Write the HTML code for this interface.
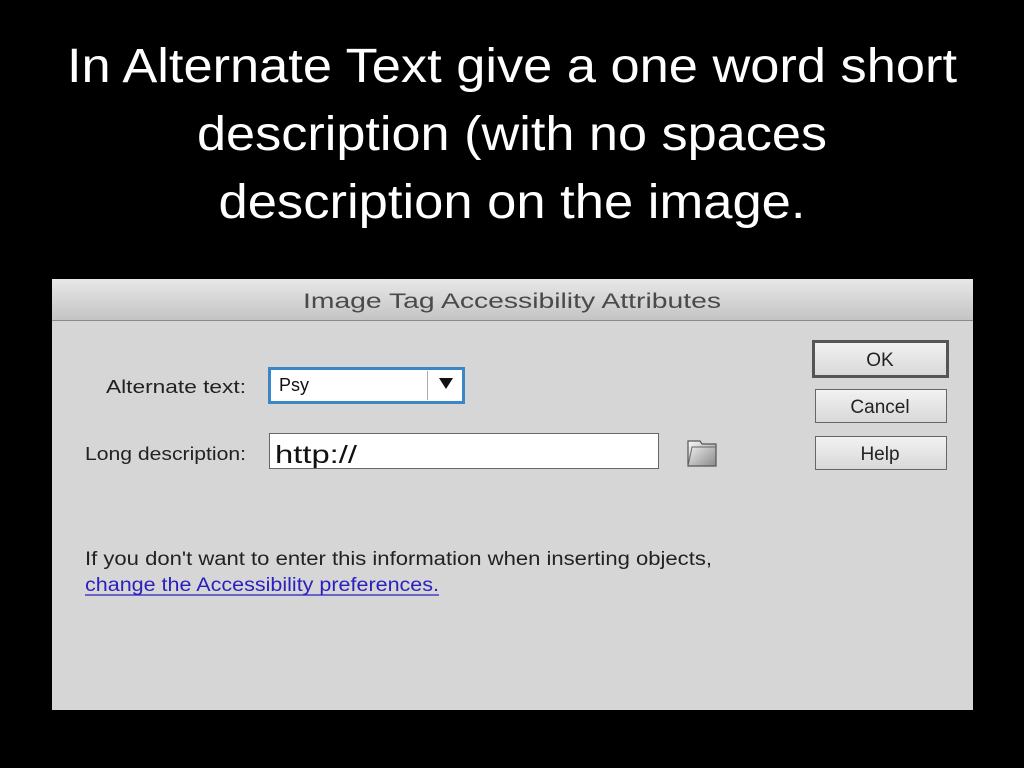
<!DOCTYPE html>
<html><head><style>html,body{margin:0;padding:0;background:#000;}svg{display:block}</style></head>
<body>
<svg width="1024" height="768" xmlns="http://www.w3.org/2000/svg">
<defs>
<linearGradient id="tb" x1="0" y1="0" x2="0" y2="1"><stop offset="0" stop-color="#e8e8e8"/><stop offset="1" stop-color="#c4c4c4"/></linearGradient>
<linearGradient id="btn" x1="0" y1="0" x2="0" y2="1"><stop offset="0" stop-color="#f2f2f2"/><stop offset="1" stop-color="#d8d8d8"/></linearGradient>
<linearGradient id="fold" x1="0" y1="0" x2="1" y2="1"><stop offset="0" stop-color="#fafafa"/><stop offset="1" stop-color="#8a8a8a"/></linearGradient>
</defs>
<rect width="1024" height="768" fill="#000"/>
<g fill="#fff" font-family="Liberation Sans, sans-serif" font-size="48" text-anchor="middle">
<text x="512" y="82" textLength="890" lengthAdjust="spacingAndGlyphs">In Alternate Text give a one word short</text>
<text x="512" y="150" textLength="630" lengthAdjust="spacingAndGlyphs">description (with no spaces</text>
<text x="512" y="218" textLength="587" lengthAdjust="spacingAndGlyphs">description on the image.</text>
</g>
<rect x="52" y="279" width="921" height="431" fill="#d6d6d6"/>
<rect x="52" y="279" width="921" height="41" fill="url(#tb)"/>
<line x1="52" y1="320.5" x2="973" y2="320.5" stroke="#8a8a8a"/>
<g font-family="Liberation Sans, sans-serif">
<text x="303" y="308" font-size="21" fill="#4a4a4a" textLength="418" lengthAdjust="spacingAndGlyphs">Image Tag Accessibility Attributes</text>
<text x="106" y="393" font-size="18" fill="#222" textLength="140" lengthAdjust="spacingAndGlyphs">Alternate text:</text>
<text x="85" y="460" font-size="18" fill="#222" textLength="161" lengthAdjust="spacingAndGlyphs">Long description:</text>
<rect x="269.5" y="368.5" width="194" height="34" fill="#fff" stroke="#3a86c6" stroke-width="3"/>
<line x1="427.5" y1="371" x2="427.5" y2="400" stroke="#aaa"/>
<path d="M439 378 L453 378 L446 389 Z" fill="#111"/>
<text x="279" y="391" font-size="18" fill="#111">Psy</text>
<rect x="269.5" y="433.5" width="389" height="35" fill="#fff" stroke="#666"/>
<text x="275" y="463" font-size="25" fill="#111" textLength="82" lengthAdjust="spacingAndGlyphs">http://</text>
<path d="M688 441 L700 441 L702 444 L716 444 L716 466 L688 466 Z" fill="url(#fold)" stroke="#555" stroke-width="1.2"/>
<path d="M688 466 L692 447 L716 447" fill="none" stroke="#666" stroke-width="1"/>
<rect x="813.5" y="341.5" width="134" height="35" fill="url(#btn)" stroke="#555" stroke-width="3"/>
<rect x="815.5" y="389.5" width="131" height="33" fill="url(#btn)" stroke="#666"/>
<rect x="815.5" y="436.5" width="131" height="33" fill="url(#btn)" stroke="#666"/>
<g font-size="19" fill="#222" text-anchor="middle">
<text x="880" y="366">OK</text>
<text x="880" y="413">Cancel</text>
<text x="880" y="460">Help</text>
</g>
<text x="85" y="565" font-size="19" fill="#222" textLength="627" lengthAdjust="spacingAndGlyphs">If you don't want to enter this information when inserting objects,</text>
<text x="85" y="591" font-size="19" fill="#2a1fc0" textLength="354" lengthAdjust="spacingAndGlyphs">change the Accessibility preferences.</text>
<line x1="85" y1="595" x2="439" y2="595" stroke="#2a1fc0" stroke-width="1.3"/>
</g>
</svg>
</body></html>
